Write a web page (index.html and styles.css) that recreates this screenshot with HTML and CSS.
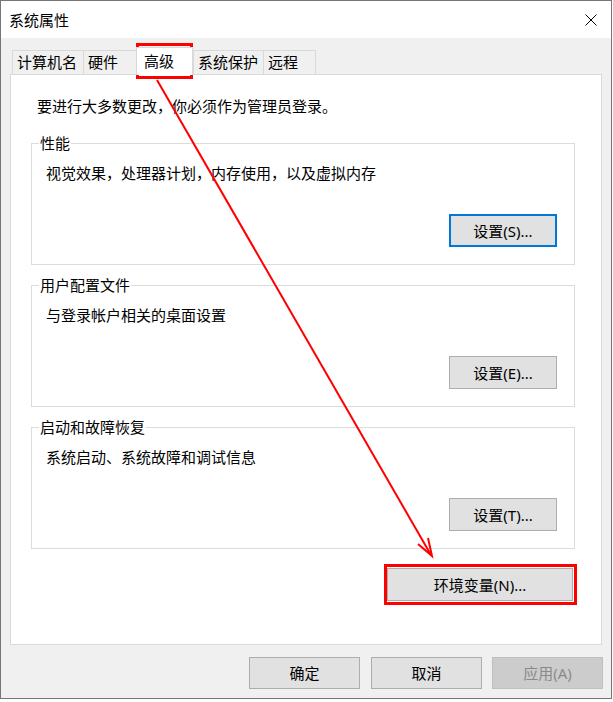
FILE: index.html
```html
<!DOCTYPE html>
<html lang="zh-CN">
<head>
<meta charset="utf-8">
<title>系统属性</title>
<link rel="stylesheet" href="styles.css">
</head>
<body>
<div class="window">
  <div class="titlebar">
    <span class="title">系统属性</span>
    <svg class="close" width="12" height="12" viewBox="0 0 12 12"><path d="M0.5 0.5 L11.5 11.5 M11.5 0.5 L0.5 11.5" stroke="#000" stroke-width="1" fill="none"/></svg>
  </div>
  <div class="content">
    <div class="tabs">
      <div class="tab t1">计算机名</div>
      <div class="tab t2">硬件</div>
      <div class="tab t3 selected">高级</div>
      <div class="tab t4">系统保护</div>
      <div class="tab t5">远程</div>
    </div>
    <div class="panel">
      <p class="intro">要进行大多数更改，你必须作为管理员登录。</p>
      <fieldset class="group first">
        <legend>性能</legend>
        <div class="group-body">
          <p class="group-text">视觉效果，处理器计划，内存使用，以及虚拟内存</p>
          <div class="btn-row"><button class="btn set focused">设置(S)...</button></div>
        </div>
      </fieldset>
      <fieldset class="group">
        <legend>用户配置文件</legend>
        <div class="group-body">
          <p class="group-text">与登录帐户相关的桌面设置</p>
          <div class="btn-row"><button class="btn set">设置(E)...</button></div>
        </div>
      </fieldset>
      <fieldset class="group">
        <legend>启动和故障恢复</legend>
        <div class="group-body">
          <p class="group-text">系统启动、系统故障和调试信息</p>
          <div class="btn-row"><button class="btn set">设置(T)...</button></div>
        </div>
      </fieldset>
      <div class="env-row"><button class="btn env">环境变量(N)...</button></div>
    </div>
    <div class="footer">
      <button class="btn dlg ok">确定</button>
      <button class="btn dlg">取消</button>
      <button class="btn dlg disabled">应用(A)</button>
    </div>
  </div>
</div>
<svg class="annot" width="613" height="702" viewBox="0 0 613 702">
  <rect x="137.5" y="44.5" width="54" height="33" fill="none" stroke="#ff0000" stroke-width="3"/>
  <rect x="385.5" y="565.5" width="190" height="38" fill="none" stroke="#ff0000" stroke-width="3"/>
  <line x1="157" y1="80" x2="431" y2="555" stroke="#ff0000" stroke-width="2"/>
  <polyline points="418,544 432,556 428,538" fill="none" stroke="#ff0000" stroke-width="2"/>
</svg>
</body>
</html>
```
FILE: styles.css
```css
html, body {
  margin: 0;
  padding: 0;
  background: #ffffff;
}

body {
  font-family: "Noto Sans", "Noto Sans CJK SC", sans-serif;
  font-size: 15px;
  color: #000;
}

.window {
  width: 612px;
  height: 699px;
  box-sizing: border-box;
  border: 1px solid #767676;
  display: flex;
  flex-direction: column;
  background: #f0f0f0;
}

.titlebar {
  height: 37px;
  background: #ffffff;
  display: flex;
  align-items: center;
  justify-content: space-between;
  padding: 0 14px 0 8px;
  flex-shrink: 0;
}

.title {
  line-height: 20px;
}

.close {
  display: block;
}

.content {
  flex: 1;
  padding: 12px 9px 9px 9px;
  display: flex;
  flex-direction: column;
}

.tabs {
  display: flex;
  align-items: flex-end;
  height: 24px;
  padding-left: 2px;
}

.tab {
  box-sizing: border-box;
  height: 24px;
  border-top: 1px solid #d9d9d9;
  border-left: 1px solid #d9d9d9;
  background: #f0f0f0;
  line-height: 23px;
  padding-left: 4px;
  white-space: nowrap;
}

.t1 { width: 71px; }
.t2 { width: 53px; }
.t3 { width: 57px; }
.t4 { width: 70px; }
.t5 { width: 53px; border-right: 1px solid #d9d9d9; }

.tab.selected {
  height: 28px;
  margin-bottom: -1px;
  background: #ffffff;
  border-right: 1px solid #d9d9d9;
  position: relative;
  z-index: 1;
  padding-left: 7px;
  line-height: 26px;
}

.panel {
  box-sizing: border-box;
  height: 571px;
  border: 1px solid #d9d9d9;
  background: #ffffff;
  display: flex;
  flex-direction: column;
}

.intro {
  margin: 21px 0 0 0;
  padding-left: 26px;
  line-height: 20px;
}

.group {
  margin: 10px 26px 0 20px;
  padding: 0;
  min-width: 0;
  border: 1px solid #dcdcdc;
}

.group.first {
  margin-top: 17px;
}

.group legend {
  margin-left: 7px;
  padding: 0 1px;
  line-height: 20px;
}

.group-body {
  padding: 0 17px 17px 14px;
  display: flex;
  flex-direction: column;
}

.group-text {
  margin: 10px 0 0 0;
  line-height: 20px;
}

.btn-row {
  margin-top: 31px;
  display: flex;
  justify-content: flex-end;
}

.btn {
  box-sizing: border-box;
  font-family: "Noto Sans", "Noto Sans CJK SC", sans-serif;
  font-size: 15px;
  color: #000;
  background: #e1e1e1;
  border: 1px solid #adadad;
  padding: 0;
  margin: 0;
  line-height: 20px;
}

.btn.set {
  width: 108px;
  height: 33px;
}

.btn.focused {
  border: 2px solid #0078d7;
}

.env-row {
  margin-top: 19px;
  padding-right: 28px;
  display: flex;
  justify-content: flex-end;
}

.btn.env {
  width: 186px;
  height: 33px;
}

.footer {
  margin-top: 12px;
  margin-right: -1px;
  display: flex;
  justify-content: flex-end;
  gap: 10px;
}

.btn.dlg {
  width: 111px;
  height: 32px;
}

.btn.ok {
  margin-right: 1px;
}

.btn.disabled {
  background: #cccccc;
  border-color: #bfbfbf;
  color: #8a8a8a;
}

.annot {
  position: absolute;
  top: 0;
  left: 0;
  pointer-events: none;
}
```
